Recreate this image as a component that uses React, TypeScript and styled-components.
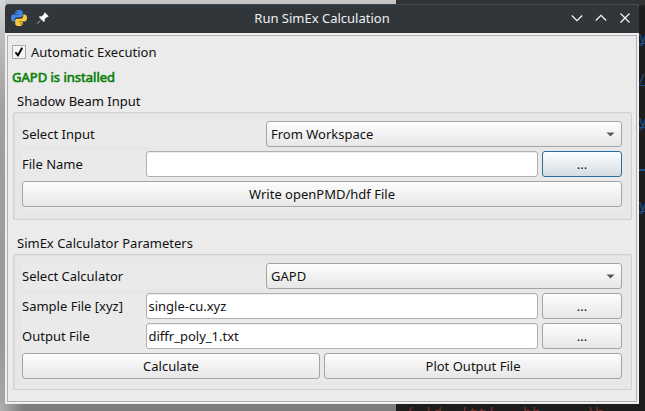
import React from "react";
import styled, { createGlobalStyle, css } from "styled-components";

const GlobalStyle = createGlobalStyle`
  * { box-sizing: border-box; }
  html, body { margin: 0; padding: 0; overflow: hidden; }
  body { font-family: "Noto Sans", sans-serif; font-size: 13px; color: #111; }
  button, input { font: inherit; color: inherit; margin: 0; }
`;

const Desktop = styled.main`
  position: relative;
  width: 645px;
  height: 411px;
  padding: 4px 6px 7px 5px;
  overflow: hidden;
  background: #8a8a8a;
`;

const LightPane = styled.div`
  position: absolute;
  inset: 0 249px 0 0;
  background:
    linear-gradient(to right, #b0b0b0, #7c7c7c 24px, #7c7c7c) 0 404px / 100% 7px no-repeat,
    linear-gradient(#c9c9c9, #c2c2c2) 5px 0 / 100% 4px no-repeat,
    linear-gradient(#d6d6d6, #bdbdbd 40px, #a0a0a0 110px, #989898 340px, #a8a8a8);
`;

const EditorPane = styled.div`
  position: absolute;
  inset: 0 0 0 396px;
  overflow: hidden;
  background: linear-gradient(#303233 0, #303233 5px, #1d1d1d 6px);
`;

const LinkEdge = styled.span<{ $top: number; $thick?: boolean }>`
  position: absolute;
  left: 243px;
  top: ${(p) => p.$top}px;
  width: 8px;
  height: ${(p) => (p.$thick ? 18 : 17)}px;
  line-height: 19px;
  font-size: 15px;
  color: #1d4f8c;
  border-bottom: ${(p) => (p.$thick ? 2 : 1)}px solid #1d4f8c;
`;

const CodeLine = styled.span`
  position: absolute;
  left: 10px;
  top: 406px;
  font: 15px/17px "Liberation Mono", monospace;
  color: #7c2f2c;
  white-space: pre;
`;

const Window = styled.section`
  position: relative;
  height: 400px;
  display: flex;
  flex-direction: column;
  border-radius: 4px 4px 0 0;
  overflow: hidden;
  background: #efefef;
`;

const TitleBar = styled.header`
  height: 29px;
  flex: none;
  display: grid;
  grid-template-columns: 80px 1fr 80px;
  align-items: center;
  background: #31363b;
  border-top: 1px solid #414a52;
  color: #eff0f1;
`;

const Title = styled.h1`
  margin: -2px 0 0;
  font-size: 13px;
  font-weight: 400;
  line-height: 18px;
  text-align: center;
`;

const TitleIcons = styled.div<{ $end?: boolean }>`
  display: flex;
  align-items: center;
  margin-top: -2px;
  ${(p) =>
    p.$end
      ? css`justify-content: flex-end; gap: 12px; padding-right: 8px;`
      : css`gap: 10px; padding-left: 6px;`}
  svg { display: block; }
`;

const Body = styled.div`
  flex: 1;
  margin: 2px;
  padding: 0 4px 0 5px;
  border: 1px solid #b1b1b1;
  background: #ebebeb;
  display: flex;
  flex-direction: column;
`;

const CheckRow = styled.label`
  display: flex;
  align-items: center;
  gap: 5px;
  height: 32px;
  margin-left: -1px;
`;

const CheckBox = styled.span`
  width: 14px;
  height: 14px;
  display: grid;
  place-items: center;
  background: #f5f5f5;
  border: 1px solid #aaa;
`;

const Status = styled.p`
  margin: 0 0 0 -1px;
  height: 18px;
  line-height: 18px;
  color: #0a800a;
  -webkit-text-stroke: 0.6px #0a800a;
`;

const Legend = styled.h2<{ $gap?: boolean }>`
  margin: ${(p) => (p.$gap ? "13px" : "5px")} 0 0 4px;
  height: 21px;
  font-size: 13px;
  font-weight: 400;
  line-height: 20px;
`;

const Group = styled.div<{ $height: number }>`
  height: ${(p) => p.$height}px;
  padding: 8px 9px 8px 8px;
  border: 1px solid #d0d0d0;
  border-radius: 2px;
  background: #e7e7e7;
  box-shadow: inset 1px 1px #e1e1e1;
  display: flex;
  flex-direction: column;
  gap: 4px;
`;

const Rows = styled.div`
  flex: 1;
  display: flex;
  flex-direction: column;
  gap: 4px;
  background: #eaeaea;
`;

const Row = styled.div<{ $columns: string }>`
  height: 26px;
  flex: none;
  display: grid;
  grid-template-columns: ${(p) => p.$columns};
  column-gap: 4px;
  align-items: center;
  background: #eaeaea;
`;

const frame = css`
  height: 26px;
  width: 100%;
  border: 1px solid #a4a4a4;
  border-radius: 3px;
`;

const PushButton = styled.button<{ $focused?: boolean }>`
  ${frame}
  padding: 0;
  line-height: 22px;
  background: linear-gradient(#fdfdfd, #e7e7e7);
  ${(p) =>
    p.$focused &&
    css`
      border-color: #2a6c9c;
      background: linear-gradient(#fdfeff, #d5dde2);
    `}
`;

const Combo = styled.button`
  ${frame}
  display: flex;
  align-items: center;
  justify-content: space-between;
  padding: 0 6px 0 4px;
  line-height: 22px;
  background: linear-gradient(#fdfdfd, #e7e7e7);
`;

const TextField = styled.input`
  ${frame}
  padding: 0 2px 0 1.5px;
  border-color: #b0b0b0;
  background: #fff;
  box-shadow: inset 0 1px #eee;
  outline: none;
`;

const PythonIcon = () => (
  <svg width="16" height="16" viewBox="0 0 16 16">
    <path fill="#3f83e4" d="M8 0C5.5 0 4.3.7 4.3 2.3V4H8.2v.6H2.6C.9 4.6 0 6 0 8.1s.9 3.5 2.3 3.5h1.5V9.7c0-1.4 1-2.4 2.4-2.4h3.6c1.2 0 2-.9 2-2V2.3C11.8.8 10.5 0 8 0Z" />
    <path fill="#f7c83d" d="M8 16c2.5 0 3.7-.7 3.7-2.3V12H7.8v-.6h5.6c1.7 0 2.6-1.4 2.6-3.5s-.9-3.5-2.3-3.5h-1.5v1.9c0 1.4-1 2.4-2.4 2.4H6.2c-1.2 0-2 .9-2 2v3c0 1.5 1.3 2.3 3.8 2.3Z" />
    <circle cx="6" cy="2" r=".8" fill="#25435f" />
    <circle cx="10" cy="14" r=".8" fill="#705b28" />
  </svg>
);

const PinIcon = () => (
  <svg width="12" height="12" viewBox="0 0 12 12" fill="#fff">
    <path d="M7.7.3 11.7 4.3 10.8 5 10.2 4.7 7.6 7.3 7.7 9.3 6.9 10 4.4 7.6.8 11.4.3 11.5.4 11 4.3 7.5 1.9 5.1 2.7 4.3 4.7 4.4 7.3 1.8 7 1.2Z" />
  </svg>
);

const WindowGlyph = ({ d }: { d: string }) => (
  <svg width="12" height="12" viewBox="0 0 12 12" fill="none" stroke="#fcfcfc" strokeWidth="1.15">
    <path d={d} />
  </svg>
);

const Arrow = () => (
  <svg width="9" height="5" viewBox="0 0 9 5">
    <path d="M.5.5h8l-4 4Z" fill="#5a5a5a" />
  </svg>
);

const COMBO_COLUMNS = "240px 1fr";
const FILE_COLUMNS = "120px 1fr 80px";

const FileRow = ({ label, value, focused }: { label: string; value: string; focused?: boolean }) => (
  <Row $columns={FILE_COLUMNS}>
    <span>{label}</span>
    <TextField aria-label={label} defaultValue={value} />
    <PushButton $focused={focused}>...</PushButton>
  </Row>
);

const ComboRow = ({ label, value }: { label: string; value: string }) => (
  <Row $columns={COMBO_COLUMNS}>
    <span>{label}</span>
    <Combo>
      {value}
      <Arrow />
    </Combo>
  </Row>
);

export default function App() {
  return (
    <>
      <GlobalStyle />
      <Desktop>
        <LightPane />
        <EditorPane>
          <LinkEdge $top={27}>y</LinkEdge>
          <LinkEdge $top={69}>/</LinkEdge>
          <LinkEdge $top={111}>y</LinkEdge>
          <LinkEdge $top={153} $thick />
          <LinkEdge $top={195}>y</LinkEdge>
          <CodeLine>{"( 'd  'tt'   bb     )b"}</CodeLine>
        </EditorPane>
        <Window>
          <TitleBar>
            <TitleIcons>
              <PythonIcon />
              <PinIcon />
            </TitleIcons>
            <Title>Run SimEx Calculation</Title>
            <TitleIcons $end>
              <WindowGlyph d="M.8 3.5 6 8.7l5.2-5.2" />
              <WindowGlyph d="M.8 8.5 6 3.3l5.2 5.2" />
              <WindowGlyph d="m1.5 1.5 9 9m0-9-9 9" />
            </TitleIcons>
          </TitleBar>
          <Body>
            <CheckRow>
              <CheckBox>
                <svg width="10" height="10" viewBox="0 0 10 10" fill="none" stroke="#000" strokeWidth="1.9">
                  <path d="M1.5 5.3 4 8.3 8.2.8" />
                </svg>
              </CheckBox>
              Automatic Execution
            </CheckRow>
            <Status>GAPD is installed</Status>
            <Legend>Shadow Beam Input</Legend>
            <Group $height={108}>
              <ComboRow label="Select Input" value="From Workspace" />
              <Rows>
                <FileRow label="File Name" value="" focused />
                <PushButton>Write openPMD/hdf File</PushButton>
              </Rows>
            </Group>
            <Legend $gap>SimEx Calculator Parameters</Legend>
            <Group $height={136}>
              <ComboRow label="Select Calculator" value="GAPD" />
              <Rows>
                <FileRow label="Sample File [xyz]" value="single-cu.xyz" />
                <FileRow label="Output File" value="diffr_poly_1.txt" />
                <Row $columns="1fr 1fr">
                  <PushButton>Calculate</PushButton>
                  <PushButton>Plot Output File</PushButton>
                </Row>
              </Rows>
            </Group>
          </Body>
        </Window>
      </Desktop>
    </>
  );
}
